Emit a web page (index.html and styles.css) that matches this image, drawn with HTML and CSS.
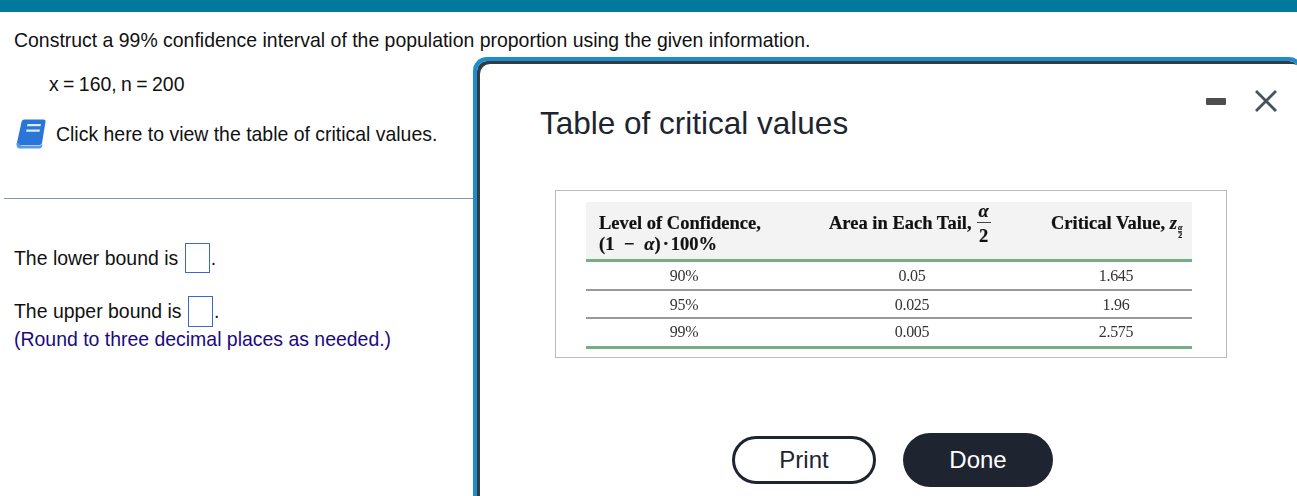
FILE: index.html
```html
<!DOCTYPE html>
<html lang="en">
<head>
<meta charset="utf-8">
<title>Table of critical values</title>
<link rel="stylesheet" href="styles.css">
</head>
<body>
<div class="topbar"></div>
<main class="question">
  <p class="prompt">Construct a 99% confidence interval of the population proportion using the given information.</p>
  <p class="given">x = 160, n = 200</p>
  <p class="link">
    <svg class="book" viewBox="0 0 30 30" width="30" height="30" aria-hidden="true">
      <path d="M8 0.500H27.500Q30 0.500 29.500 3L26 24Q25.500 26 23.500 26H6L1 28L0.800 24.500L5.500 3Q6 0.500 8 0.500Z" fill="#2a75d8"/>
      <path d="M0.500 24Q0.200 29.500 4 29.500H23.500Q25.500 29.500 26 27.500L26.500 25L24 26.500H5Q3 26.500 3 24Z" fill="#5a9be8"/>
      <path d="M11.500 5H25L24.500 7.200H11Z" fill="#dcebfb"/>
      <path d="M10.500 10.500H24L23.500 12.700H10Z" fill="#dcebfb"/>
    </svg>
    <span>Click here to view the table of critical values.</span>
  </p>
  <hr class="rule">
  <p class="answer lower">The lower bound is <span class="box"></span>.</p>
  <p class="answer upper">The upper bound is <span class="box tall"></span>.</p>
  <p class="hint">(Round to three decimal places as needed.)</p>
</main>

<section class="modal">
  <div class="modal-head">
    <h1>Table of critical values</h1>
    <div class="controls">
      <span class="minimize"></span>
      <svg class="close" viewBox="0 0 22 22" width="22" height="22" aria-hidden="true">
        <path d="M1 1L21 21M21 1L1 21" stroke="#45525f" stroke-width="2.800" fill="none"/>
      </svg>
    </div>
  </div>
  <div class="figure">
    <div class="crit">
      <div class="crit-head">
        <div class="h1">Level of Confidence,<br>(1 <span class="minus">&minus;</span> <i>&alpha;</i>)<span class="dot">&middot;</span>100%</div>
        <div class="h2">Area in Each Tail, <span class="frac"><i>&alpha;</i><b>2</b></span></div>
        <div class="h3">Critical Value, <i>z</i><span class="sub"><i>&alpha;</i><b>2</b></span></div>
      </div>
      <div class="crit-row first"><span class="c1">90%</span><span class="c2">0.05</span><span class="c3">1.645</span></div>
      <div class="crit-row"><span class="c1">95%</span><span class="c2">0.025</span><span class="c3">1.96</span></div>
      <div class="crit-row last"><span class="c1">99%</span><span class="c2">0.005</span><span class="c3">2.575</span></div>
    </div>
  </div>
  <div class="actions">
    <button class="btn print">Print</button>
    <button class="btn done">Done</button>
  </div>
</section>
</body>
</html>
```

FILE: styles.css
```css
html, body {
  margin: 0;
  height: 496px;
  overflow: hidden;
  background: #fff;
}
body {
  position: relative;
  font-family: "Liberation Sans", Arial, sans-serif;
  font-size: 19.45px;
  color: #111;
}
p { margin: 0; }

.topbar {
  height: 12px;
  background: #01799d;
}

.question {
  padding: 16px 0 0 14px;
  line-height: 24px;
}
.prompt { height: 24px; }
.given {
  margin: 20px 0 0 35px;
  word-spacing: -1px;
}
.link {
  display: flex;
  align-items: center;
  gap: 10px;
  margin: 23px 0 0 2px;
  height: 30px;
}
.book { flex: none; width: 30px; height: 30px; }
.rule {
  margin: 49px 0 0 -10px;
  border: 0;
  height: 1px;
  background: #8a94a8;
  width: 480px;
}
.answer { display: flex; align-items: center; }
.answer .box { margin-left: 6.500px; margin-right: 1px; }
.lower { margin-top: 44px; height: 30px; }
.upper { margin-top: 22px; height: 32px; }
.box {
  display: inline-block;
  box-sizing: border-box;
  width: 25px;
  height: 30px;
  border: 1px solid #3b68cc;
}
.box.tall { height: 31px; }
.hint { color: #1c0a80; margin-top: 0; }

.modal {
  position: absolute;
  left: 473px;
  top: 57px;
  width: 830px;
  height: 439px;
  box-sizing: border-box;
  border: 4px solid #1a8fd0;
  border-bottom: 0;
  border-radius: 14px 14px 0 0;
  background: #fff;
  box-shadow: inset 3px 3px 0 0 #363b40;
  padding: 3px;
}
.modal-head {
  display: flex;
  justify-content: space-between;
  height: 126px;
}
.modal-head h1 {
  margin: 39px 0 0 60px;
  font-size: 31.500px;
  font-weight: 400;
  line-height: 40px;
  color: #1d2530;
}
.controls {
  display: flex;
  align-items: center;
  gap: 28px;
  margin: 0 19px 52px 0;
}
.minimize {
  width: 20px;
  height: 7px;
  margin-right: 1px;
  background: #4d4d4f;
  border-radius: 1px;
}

.figure {
  box-sizing: border-box;
  width: 672px;
  height: 168px;
  margin-left: 75px;
  border: 1px solid #bbb;
  padding: 11px 0 0 30px;
}
.crit {
  width: 606px;
  font-family: "Liberation Serif", "Times New Roman", serif;
  font-size: 16px;
  color: #333;
  filter: blur(0.4px);
}
.crit-head {
  position: relative;
  height: 57px;
  background: #f3f3f3;
  border-bottom: 3px solid #76ad84;
  font-size: 18.500px;
  font-weight: 700;
  line-height: 21px;
  color: #111;
  -webkit-text-stroke: 0.2px #111;
}
.h1, .h2, .h3 { position: absolute; white-space: nowrap; }
.h1 { left: 13px; top: 11px; }
.h2 { left: 243px; top: 11px; display: flex; align-items: center; gap: 5px; height: 21px; }
.h3 { left: 465px; top: 11px; height: 21px; }
.minus { margin: 0 5px; }
.dot { margin: 0 2px; }
.frac {
  display: inline-flex;
  flex-direction: column;
  align-items: center;
  font-size: 18.500px;
  line-height: 21px;
}
.frac i { display: block; width: 14px; text-align: center; border-bottom: 1px solid #444; }
.frac b { display: block; margin-top: 3px; }
.sub {
  display: inline-flex;
  flex-direction: column;
  align-items: center;
  vertical-align: -1px;
  font-size: 8px;
  line-height: 7px;
  margin-left: 1px;
}
.sub i { border-bottom: 1px solid #444; }
.crit-row {
  display: grid;
  grid-template-columns: 196px 260px 148px;
  height: 28px;
  box-sizing: border-box;
  padding-top: 1px;
  align-items: center;
  border-bottom: 2px solid #9a9a9a;
  letter-spacing: -0.3px;
}
.crit-row span { text-align: center; }
.crit-row.first { height: 29px; }
.crit-row.last {
  height: 30px;
  padding-top: 0;
  padding-bottom: 1px;
  border-bottom: 3px solid #76ad84;
}

.actions {
  display: flex;
  align-items: center;
  gap: 27px;
  margin: 75px 0 0 252px;
}
.btn {
  font-family: "Liberation Sans", Arial, sans-serif;
  font-size: 24px;
  border-radius: 28px;
  box-sizing: border-box;
  padding: 0;
  color: #1d2530;
}
.print {
  width: 144px;
  height: 48px;
  background: #fff;
  border: 3px solid #1f2530;
}
.done {
  width: 150px;
  height: 54px;
  background: #1f2530;
  border: 0;
  color: #fff;
}
```
